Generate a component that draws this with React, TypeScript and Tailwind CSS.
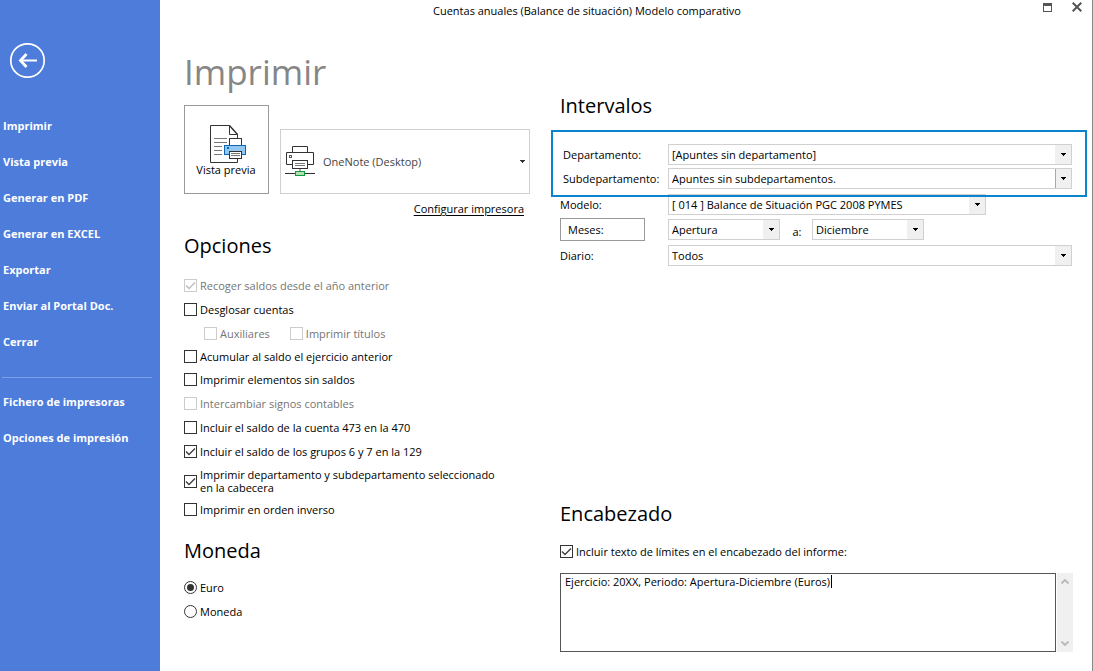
import { useState } from 'react'
import type { ReactNode } from 'react'
import clsx from 'clsx'

const menuItems = [
  'Imprimir',
  'Vista previa',
  'Generar en PDF',
  'Generar en EXCEL',
  'Exportar',
  'Enviar al Portal Doc.',
  'Cerrar',
]

const setupItems = ['Fichero de impresoras', 'Opciones de impresión']

const months = ['Apertura', 'Enero', 'Febrero', 'Marzo', 'Abril', 'Mayo', 'Junio', 'Julio', 'Agosto', 'Septiembre', 'Octubre', 'Noviembre', 'Diciembre']

interface CheckProps {
  label: ReactNode
  checked?: boolean
  disabled?: boolean
  className?: string
}

function Check({ label, checked, disabled, className }: CheckProps) {
  return (
    <label className={clsx('flex items-center gap-[3px]', disabled && 'text-[#757575]', className)}>
      <span className="relative flex size-[13px] shrink-0">
        <input
          type="checkbox"
          defaultChecked={checked}
          disabled={disabled}
          className="peer size-[13px] appearance-none border border-[#333333] bg-white disabled:border-[#cccccc]"
        />
        <svg
          viewBox="0 0 13 13"
          className="pointer-events-none absolute inset-0 hidden size-[13px] text-[#404040] peer-checked:block peer-disabled:text-[#bdbdbd]"
        >
          <path d="M2 6.5 L5 9.5 L11 3.5" fill="none" stroke="currentColor" strokeWidth="1.4" />
        </svg>
      </span>
      <span>{label}</span>
    </label>
  )
}

interface RadioProps {
  label: string
  value: string
  checked?: boolean
}

function Radio({ label, value, checked }: RadioProps) {
  return (
    <label className="flex h-6 items-center gap-[3px]">
      <span className="relative flex size-[13px] shrink-0">
        <input
          type="radio"
          name="moneda"
          value={value}
          defaultChecked={checked}
          className="peer size-[13px] appearance-none rounded-full border border-[#333333] bg-white"
        />
        <span className="pointer-events-none absolute inset-[3px] hidden rounded-full bg-[#333333] peer-checked:block" />
      </span>
      {label}
    </label>
  )
}

interface ComboProps {
  id: string
  options: string[]
  value?: string
  label?: string
  className?: string
  divided?: boolean
}

function Combo({ id, options, value, label, className, divided }: ComboProps) {
  return (
    <div className={clsx('relative h-[21px]', className)}>
      <select
        id={id}
        aria-label={label}
        defaultValue={value ?? options[0]}
        className="block h-[21px] w-full appearance-none border border-[#d0d0d0] bg-white pr-5 pl-[3px] text-black"
      >
        {options.map((option) => (
          <option key={option}>{option}</option>
        ))}
      </select>
      <span
        className={clsx(
          'pointer-events-none absolute inset-y-px right-px flex w-4 items-center justify-center bg-[#f0f0f0]',
          divided && 'border-l border-[#a8a8a8]'
        )}
      >
        <svg viewBox="0 0 5 3" className="h-[3px] w-[5px]" shapeRendering="crispEdges">
          <path d="M0 0H5V1H4V2H3V3H2V2H1V1H0Z" fill="#000" />
        </svg>
      </span>
    </div>
  )
}

function PreviewIcon() {
  return (
    <svg viewBox="0 0 36 38" className="h-[38px] w-9" fill="none">
      <path d="M27.5 37.5H0.5V0.5H19.5L27.5 9.5V37.5Z" fill="#fff" stroke="#333" />
      <path d="M19.5 0.5V9.5H27.5" stroke="#333" />
      <path d="M19.5 0.5L27.5 9.5" stroke="#333" strokeWidth="1.3" />
      <path d="M4 13.5H17M4 17.5H17M4 21.5H12M4 25.5H12M4 29.5H12" stroke="#777" />
      <rect x="19.5" y="13.5" width="12" height="8" fill="#fff" stroke="#333" />
      <rect x="14.5" y="20.5" width="21" height="9" fill="#92c8f0" stroke="#0f66b4" />
      <rect x="17" y="22" width="2" height="2" fill="#0f66b4" />
      <rect x="19.5" y="26.5" width="12" height="7" fill="#fff" stroke="#333" />
      <path d="M21 28.5H30M21 30.5H30" stroke="#777" />
    </svg>
  )
}

function NetworkPrinterIcon() {
  return (
    <svg viewBox="0 0 30 31" className="h-[31px] w-[30px] shrink-0" fill="none">
      <path d="M7.5 7V0.5H22.5V7" fill="#fff" stroke="#333" />
      <path d="M7.5 18.5H1.5V6.5H28.5V18.5H22.5" stroke="#333" />
      <rect x="4.5" y="9.5" width="2" height="2" stroke="#555" />
      <rect x="7.5" y="14.5" width="15" height="8" fill="#fff" stroke="#333" />
      <path d="M10 17.5H20M10 19.5H20" stroke="#777" />
      <path d="M15 23V26" stroke="#aaa" strokeWidth="2" />
      <path d="M0 27.5H10M20 27.5H30" stroke="#333" />
      <rect x="10.5" y="25.5" width="9" height="4" fill="#b5e0b5" stroke="#0f9a3c" />
    </svg>
  )
}

function Sidebar() {
  const itemClass = 'flex h-9 w-full items-center pl-[3px] text-left hover:bg-white/10'

  return (
    <aside className="w-40 shrink-0 bg-[#4d7cdb] pt-[43px] font-bold text-white">
      <button type="button" aria-label="Volver" className="ml-[10px] block size-9">
        <svg viewBox="0 0 36 36" className="size-9" fill="none" stroke="#fff">
          <circle cx="17.5" cy="17.5" r="16.7" strokeWidth="1.7" />
          <path d="M27 17.5H11" strokeWidth="2" />
          <path d="M16.5 11L10.5 17.5L16.5 24" strokeWidth="2.8" />
        </svg>
      </button>
      <nav className="mt-7">
        {menuItems.map((item) => (
          <button key={item} type="button" className={itemClass}>
            {item}
          </button>
        ))}
        <hr className="mt-[18px] mr-2 mb-[5px] ml-[2px] border-[#7d9fe6]" />
        {setupItems.map((item) => (
          <button key={item} type="button" className={itemClass}>
            {item}
          </button>
        ))}
      </nav>
    </aside>
  )
}

function Heading({ children, className }: { children: ReactNode; className?: string }) {
  return <h2 className={clsx('text-[20px] leading-8', className)}>{children}</h2>
}

export default function App() {
  const [headerText, setHeaderText] = useState('Ejercicio: 20XX, Periodo: Apertura-Diciembre (Euros)')

  return (
    <div className="flex min-h-screen border-r border-[#888888] bg-white font-['Open_Sans','Noto_Sans',sans-serif] text-[11px] leading-[13px] text-black">
      <Sidebar />

      <div className="flex min-w-0 flex-1 flex-col">
        {/* Title bar */}
        <header className="flex h-5 shrink-0">
          <p className="flex flex-1 items-center justify-center">
            Cuentas anuales (Balance de situación) Modelo comparativo
          </p>
          <div className="flex w-[78px] items-start justify-end gap-5 pt-[2px] pr-[10px]">
            <button type="button" aria-label="Maximizar">
              <svg viewBox="0 0 9 10" className="h-[10px] w-[9px]" shapeRendering="crispEdges">
                <path d="M0 1H9V10H0ZM1 4V9H8V4Z" fill="#555" fillRule="evenodd" />
              </svg>
            </button>
            <button type="button" aria-label="Cerrar ventana">
              <svg viewBox="0 0 10 10" className="size-[10px]">
                <path d="M0.7 0.7L9.3 9.3M9.3 0.7L0.7 9.3" stroke="#555" strokeWidth="2" />
              </svg>
            </button>
          </div>
        </header>

        <main className="flex flex-1 gap-[30px] pr-5 pb-[19px] pl-6">
          {/* Printer and options */}
          <section className="w-[346px] shrink-0">
            <h1 className="mt-7 text-[35px] leading-[48px] font-normal text-[#868686]">Imprimir</h1>

            <div className="mt-[9px] flex items-end gap-[11px]">
              <button
                type="button"
                className="flex h-[89px] w-[85px] shrink-0 flex-col items-center justify-center border border-[#999999] pt-px pr-px"
              >
                <span className="pl-1">
                  <PreviewIcon />
                </span>
                Vista previa
              </button>
              <button
                type="button"
                aria-haspopup="listbox"
                className="flex h-[65px] flex-1 items-center gap-2 border border-[#d0d0d0] px-1 text-left text-[#444444]"
              >
                <NetworkPrinterIcon />
                <span className="flex-1">OneNote (Desktop)</span>
                <svg viewBox="0 0 5 3" className="h-[3px] w-[5px]" shapeRendering="crispEdges">
                  <path d="M0 0H5V1H4V2H3V3H2V2H1V1H0Z" fill="#333" />
                </svg>
              </button>
            </div>
            <div className="mt-[7px] flex justify-end pr-[6px] leading-4">
              <a href="#configurar" className="underline underline-offset-2">
                Configurar impresora
              </a>
            </div>

            <Heading className="mt-[13px]">Opciones</Heading>
            <div className="mt-[11px]">
              <Check label="Recoger saldos desde el año anterior" checked disabled className="h-6" />
              <Check label="Desglosar cuentas" className="h-6" />
              <div className="flex gap-5 pl-5">
                <Check label="Auxiliares" disabled className="h-6" />
                <Check label="Imprimir títulos" disabled className="h-6" />
              </div>
              <Check label="Acumular al saldo el ejercicio anterior" className="h-[23px]" />
              <Check label="Imprimir elementos sin saldos" className="h-[23px]" />
              <Check label="Intercambiar signos contables" disabled className="h-6" />
              <Check label="Incluir el saldo de la cuenta 473 en la 470" className="h-6" />
              <Check label="Incluir el saldo de los grupos 6 y 7 en la 129" checked className="h-6" />
              <Check
                label={
                  <>
                    Imprimir departamento y subdepartamento seleccionado
                    <br />
                    en la cabecera
                  </>
                }
                checked
                className="h-9"
              />
              <Check label="Imprimir en orden inverso" className="h-5" />
            </div>

            <Heading className="mt-4">Moneda</Heading>
            <div className="mt-2" role="radiogroup" aria-label="Moneda">
              <Radio label="Euro" value="euro" checked />
              <Radio label="Moneda" value="moneda" />
            </div>
          </section>

          {/* Ranges and header text */}
          <section className="flex min-w-0 flex-1 flex-col pt-[70px]">
            <Heading>Intervalos</Heading>

            <div className="relative z-10 mt-2 -mr-[15px] -ml-[9px] flex flex-col gap-[3px] border-2 border-[#0a84cc] pt-3 pr-[13px] pb-[6px] pl-[10px]">
              <div className="flex items-center">
                <label htmlFor="departamento" className="w-[105px] shrink-0">
                  Departamento:
                </label>
                <Combo id="departamento" options={['[Apuntes sin departamento]']} className="flex-1" />
              </div>
              <div className="flex items-center">
                <label htmlFor="subdepartamento" className="w-[105px] shrink-0">
                  Subdepartamento:
                </label>
                <Combo id="subdepartamento" options={['Apuntes sin subdepartamentos.']} className="flex-1" divided />
              </div>
            </div>

            <div className="-mt-[3px] flex items-center">
              <label htmlFor="modelo" className="w-[108px] shrink-0">
                Modelo:
              </label>
              <Combo id="modelo" options={['[ 014 ] Balance de Situación PGC 2008 PYMES']} className="w-[318px]" />
            </div>
            <div className="mt-[3px] flex items-center">
              <div className="w-[108px] shrink-0">
                <button type="button" className="h-[23px] w-[85px] border border-[#999999] pl-[7px] text-left">
                  Meses:
                </button>
              </div>
              <Combo id="mes-desde" label="Mes inicial" options={months} className="w-28" />
              <label htmlFor="mes-hasta" className="w-8 pt-1 pl-[2px] text-center">
                a:
              </label>
              <Combo id="mes-hasta" options={months} value="Diciembre" className="w-28" />
            </div>
            <div className="mt-1 flex items-center">
              <label htmlFor="diario" className="w-[108px] shrink-0">
                Diario:
              </label>
              <Combo id="diario" options={['Todos']} className="flex-1" />
            </div>

            <Heading className="mt-auto">Encabezado</Heading>
            <Check
              label="Incluir texto de límites en el encabezado del informe:"
              checked
              className="mt-[9px] h-6"
            />
            <div className="mt-[10px] -mr-px flex gap-px">
              <div className="relative flex flex-1">
                <textarea
                  aria-label="Texto del encabezado"
                  value={headerText}
                  onChange={(e) => setHeaderText(e.target.value)}
                  className="block h-[79px] w-full resize-none overflow-hidden border border-[#555555] bg-white px-1 py-px"
                />
                <span className="pointer-events-none absolute top-[2px] left-[271px] h-[13px] w-px bg-black" />
              </div>
              <div className="flex w-4 flex-col items-center justify-between bg-[#f0f0f0] py-[6px]">
                <svg viewBox="0 0 8 5" className="h-[5px] w-2" fill="none" stroke="#bbb" strokeWidth="2">
                  <path d="M0.5 4.5L4 1L7.5 4.5" />
                </svg>
                <svg viewBox="0 0 8 5" className="h-[5px] w-2" fill="none" stroke="#bbb" strokeWidth="2">
                  <path d="M0.5 0.5L4 4L7.5 0.5" />
                </svg>
              </div>
            </div>
          </section>
        </main>
      </div>
    </div>
  )
}
